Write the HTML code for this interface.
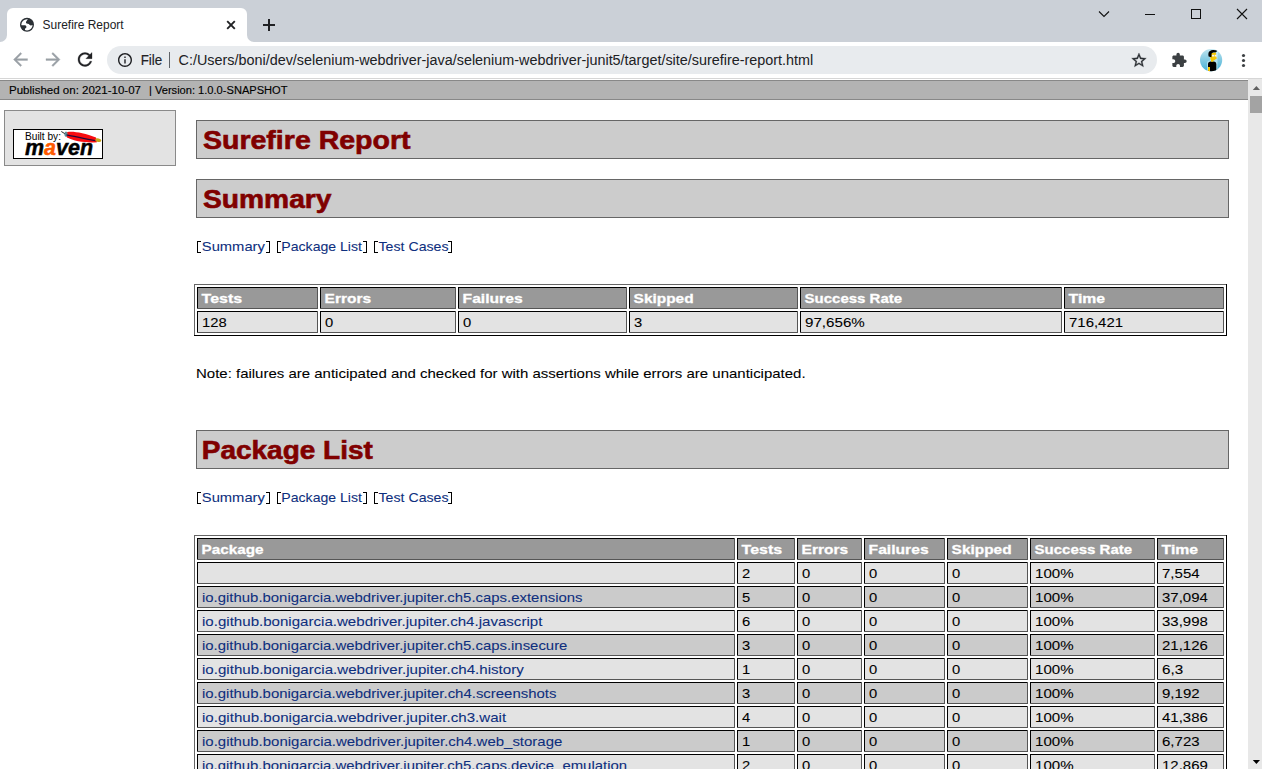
<!DOCTYPE html>
<html><head><meta charset="utf-8"><title>Surefire Report</title>
<style>html,body{margin:0;padding:0;width:1262px;height:769px;overflow:hidden;background:#fff}svg{display:block}text{white-space:pre}</style>
</head><body><svg width="1262" height="769" viewBox="0 0 1262 769">
<rect x="0" y="0" width="1262" height="42" fill="#cbd0d7"/>
<path d="M0 42 A7 7 0 0 0 7 35 L7 14 A6 6 0 0 1 13 8 L241 8 A6 6 0 0 1 247 14 L247 35 A7 7 0 0 0 254 42 Z" fill="#fff"/>
<rect x="0" y="42" width="1262" height="36" fill="#fff"/>
<rect x="0" y="78" width="1262" height="1" fill="#d6d6d6"/>
<defs><clipPath id="gc"><circle cx="27" cy="24.8" r="6.5"/></clipPath></defs><circle cx="27" cy="24.8" r="7" fill="#2b3035"/><circle cx="27" cy="24.8" r="5.6" fill="#fff"/><g clip-path="url(#gc)" fill="#2b3035"><path d="M27.8 19.3 L26.2 21.6 Q25.6 23 26.6 23.6 L28.8 24 Q29.6 25.4 30.8 25.6 L33 25 L33 17 Z"/><path d="M20 25.3 L25.2 25.3 Q26.8 25.8 26.4 27.4 L25 28.8 L24.8 32 L20 32 Z"/></g>
<text x="42.6" y="29" font-family="Liberation Sans" font-size="12" font-weight="normal" fill="#202124" textLength="81.00" lengthAdjust="spacingAndGlyphs">Surefire Report</text>
<path d="M227.2 21.2 L234.8 28.8 M234.8 21.2 L227.2 28.8" stroke="#202124" stroke-width="1.9" fill="none"/>
<path d="M269 19 V31 M263 25 H275" stroke="#202124" stroke-width="2" fill="none"/>
<path d="M1099 11.5 L1104 16.5 L1109 11.5" stroke="#111" stroke-width="1.1" fill="none"/>
<rect x="1145" y="14" width="10" height="1" fill="#111"/>
<rect x="1191.5" y="9.5" width="9" height="9" stroke="#111" stroke-width="1" fill="none"/>
<path d="M1237 9 L1247 19 M1247 9 L1237 19" stroke="#111" stroke-width="1.1" fill="none"/>
<g transform="translate(10,49) scale(0.875)"><path d="M20 11H7.83l5.59-5.59L12 4l-8 8 8 8 1.41-1.41L7.83 13H20v-2z" fill="#9aa0a6" stroke="#9aa0a6" stroke-width="0.4"/></g>
<g transform="translate(42.5,49) scale(0.875)"><path d="M4 11h12.17l-5.59-5.59L12 4l8 8-8 8-1.41-1.41L16.17 13H4v-2z" fill="#9aa0a6" stroke="#9aa0a6" stroke-width="0.4"/></g>
<g transform="translate(74.5,49) scale(0.875)"><path d="M17.65 6.35C16.2 4.9 14.21 4 12 4c-4.42 0-7.99 3.58-7.99 8s3.57 8 7.99 8c3.73 0 6.84-2.55 7.73-6h-2.08c-.82 2.33-3.04 4-5.65 4-3.31 0-6-2.69-6-6s2.69-6 6-6c1.66 0 3.14.69 4.22 1.78L13 11h7V4l-2.35 2.35z" fill="#202124" stroke="#202124" stroke-width="0.35"/></g>
<rect x="107" y="46" width="1050" height="28" rx="14" ry="14" fill="#e8ebee"/>
<g transform="translate(116.6,51.6) scale(0.7)"><path d="M11 7h2v2h-2zm0 4h2v6h-2zm1-9C6.48 2 2 6.48 2 12s4.48 10 10 10 10-4.48 10-10S17.52 2 12 2zm0 18c-4.41 0-8-3.59-8-8s3.59-8 8-8 8 3.59 8 8-3.59 8-8 8z" fill="#202124"/></g>
<text x="140.7" y="65" font-family="Liberation Sans" font-size="14" font-weight="normal" fill="#202124" stroke="#202124" stroke-width="0.15" textLength="21.60" lengthAdjust="spacingAndGlyphs">File</text>
<rect x="169" y="52" width="1" height="16" fill="#5f6368"/>
<text x="178.5" y="65" font-family="Liberation Sans" font-size="14" font-weight="normal" fill="#202124" textLength="634.80" lengthAdjust="spacingAndGlyphs">C:/Users/boni/dev/selenium-webdriver-java/selenium-webdriver-junit5/target/site/surefire-report.html</text>
<g transform="translate(1130.2,51.5) scale(0.73)"><path d="M22 9.24l-7.19-.62L12 2 9.19 8.63 2 9.24l5.46 4.73L5.82 21 12 17.27 18.18 21l-1.63-7.03L22 9.24zM12 15.4l-3.76 2.27 1-4.28-3.32-2.88 4.38-.38L12 6.1l1.71 4.04 4.38.38-3.32 2.88 1 4.28L12 15.4z" fill="#2b2f33" stroke="#2b2f33" stroke-width="0.45"/></g>
<g transform="translate(1171,52) scale(0.68)"><path d="M20.5 11H19V7c0-1.1-.9-2-2-2h-4V3.5C13 2.12 11.88 1 10.5 1S8 2.12 8 3.5V5H4c-1.1 0-1.99.9-1.99 2v3.8H3.5c1.490 0 2.7 1.21 2.7 2.7s-1.21 2.7-2.7 2.7H2V20c0 1.1.9 2 2 2h3.8v-1.5c0-1.49 1.21-2.7 2.7-2.7 1.49 0 2.7 1.21 2.7 2.7V22H17c1.1 0 2-.9 2-2v-4h1.5c1.38 0 2.5-1.12 2.5-2.5S21.88 11 20.5 11z" fill="#3c4043"/></g>
<defs><linearGradient id="av" x1="0" y1="0" x2="0" y2="1"><stop offset="0" stop-color="#bde3ee"/><stop offset="1" stop-color="#45b0d6"/></linearGradient><clipPath id="avc"><circle cx="1211.1" cy="60.1" r="11.1"/></clipPath></defs>
<circle cx="1211.1" cy="60.1" r="11.1" fill="url(#av)"/>
<g clip-path="url(#avc)"><path d="M1207 72 L1207 63 Q1207 60.5 1210 60.5 L1210 52 Q1208 49 1213 49 L1218.5 50 L1217.5 58 L1217.5 72 Z" fill="#d5f1f8" opacity="0.6"/><path d="M1208 72 L1208 64 Q1208 61.5 1211 61.5 L1214 61.5 Q1216.3 61.8 1216.3 64 L1216.3 72 Z" fill="#000"/><rect x="1208" y="67" width="2" height="5" fill="#f8c800"/><rect x="1211" y="59.5" width="2.4" height="2.2" fill="#f8c800"/><path d="M1210 53 L1216 52.5 L1216.2 57 L1217 58.3 L1215.5 59.2 Q1214.5 60.8 1212 60.5 L1210.5 59.5 Z" fill="#f8c800"/><path d="M1208.6 56.5 Q1207.8 52.5 1209.6 51.3 Q1211.3 49.8 1213.5 50 L1217.6 50.6 L1216 52.2 L1213 52.6 L1211.6 53.4 L1211.4 57.2 Z" fill="#000"/><rect x="1212" y="54.8" width="2.2" height="1.7" fill="#f4f4f4"/><rect x="1214.8" y="54.8" width="1.8" height="1.7" fill="#f4f4f4"/></g>
<circle cx="1243.5" cy="55.5" r="1.6" fill="#3c4043"/>
<circle cx="1243.5" cy="60.5" r="1.6" fill="#3c4043"/>
<circle cx="1243.5" cy="65.5" r="1.6" fill="#3c4043"/>
<rect x="0" y="79" width="1248" height="690" fill="#fff"/>
<rect x="1248" y="79" width="14" height="690" fill="#e8e8e8"/>
<path d="M1252.8 90 L1256.4 86 L1260 90 Z" fill="#606060"/>
<rect x="1250" y="96" width="12" height="17" fill="#a3a3a3"/>
<path d="M1252.8 760 L1256.4 764 L1260 760 Z" fill="#000"/>
<rect x="0" y="80" width="1248" height="20" fill="#888888"/>
<rect x="0" y="81" width="1248" height="18" fill="#b3b3b3"/>
<text x="9" y="94" font-family="Liberation Sans" font-size="10" font-weight="normal" fill="#000" stroke="#000" stroke-width="0.12" textLength="132.00" lengthAdjust="spacingAndGlyphs">Published on: 2021-10-07</text>
<text x="149" y="94" font-family="Liberation Sans" font-size="10" font-weight="normal" fill="#000" stroke="#000" stroke-width="0.12" textLength="138.50" lengthAdjust="spacingAndGlyphs">| Version: 1.0.0-SNAPSHOT</text>
<rect x="4" y="110" width="172" height="56" fill="#8a8a8a"/>
<rect x="5" y="111" width="170" height="54" fill="#e3e3e3"/>
<rect x="13" y="129" width="90" height="30" fill="#000"/>
<rect x="14" y="130" width="88" height="28" fill="#fff"/>
<text x="25" y="140" font-family="Liberation Sans" font-size="10.5" font-weight="normal" fill="#000" textLength="36.00" lengthAdjust="spacingAndGlyphs">Built by:</text>
<text x="25" y="155" font-family="Liberation Sans" font-size="22.5" font-weight="bold" font-style="italic" fill="#000" stroke="#000" stroke-width="0.5" textLength="68" lengthAdjust="spacingAndGlyphs">m<tspan fill="#ff5a00" stroke="#ff5a00">a</tspan>ven</text>
<path d="M61.3 131.5 L67 135" stroke="#111" stroke-width="0.9"/>
<path d="M67 132.3 C72 130.8 84 133 96 137.6 L97 142.2 C88 143.2 74 141.5 67 137.6 C66 136 66 134 67 132.3Z" fill="#f80c10"/>
<ellipse cx="66" cy="134.3" rx="1.6" ry="2.8" fill="#5d8c98"/>
<path d="M66.5 134.8 C75 136.4 86 139 95.5 140.6" stroke="#24083a" stroke-width="1.3" fill="none"/>
<ellipse cx="98.3" cy="140.2" rx="3" ry="1.8" transform="rotate(12 98.3 140.2)" fill="#c8a418"/>
<rect x="196" y="120" width="1033" height="39" fill="#666666"/>
<rect x="197" y="121" width="1031" height="37" fill="#cccccc"/>
<text x="203" y="149" font-family="Liberation Sans" font-size="25" font-weight="bold" fill="#800000" stroke="#800000" stroke-width="0.6" textLength="207.50" lengthAdjust="spacingAndGlyphs">Surefire Report</text>
<rect x="196" y="179" width="1033" height="39" fill="#666666"/>
<rect x="197" y="180" width="1031" height="37" fill="#cccccc"/>
<text x="203" y="208" font-family="Liberation Sans" font-size="25" font-weight="bold" fill="#800000" stroke="#800000" stroke-width="0.6" textLength="128.50" lengthAdjust="spacingAndGlyphs">Summary</text>
<rect x="196" y="430" width="1033" height="39" fill="#666666"/>
<rect x="197" y="431" width="1031" height="37" fill="#cccccc"/>
<text x="201.8" y="459" font-family="Liberation Sans" font-size="25" font-weight="bold" fill="#800000" stroke="#800000" stroke-width="0.6" textLength="171.00" lengthAdjust="spacingAndGlyphs">Package List</text>
<rect x="197" y="241" width="1" height="12" fill="#000"/>
<rect x="197" y="241" width="4" height="1" fill="#000"/>
<rect x="197" y="252" width="4" height="1" fill="#000"/>
<text x="201.8" y="251" font-family="Liberation Sans" font-size="13.6" font-weight="normal" fill="#0e2f7e" stroke="#0e2f7e" stroke-width="0.08" textLength="63.10" lengthAdjust="spacingAndGlyphs">Summary</text>
<rect x="269" y="241" width="1" height="12" fill="#000"/>
<rect x="266" y="241" width="4" height="1" fill="#000"/>
<rect x="266" y="252" width="4" height="1" fill="#000"/>
<rect x="277" y="241" width="1" height="12" fill="#000"/>
<rect x="277" y="241" width="4" height="1" fill="#000"/>
<rect x="277" y="252" width="4" height="1" fill="#000"/>
<text x="281.37" y="251" font-family="Liberation Sans" font-size="13.6" font-weight="normal" fill="#0e2f7e" stroke="#0e2f7e" stroke-width="0.08" textLength="80.57" lengthAdjust="spacingAndGlyphs">Package List</text>
<rect x="366" y="241" width="1" height="12" fill="#000"/>
<rect x="363" y="241" width="4" height="1" fill="#000"/>
<rect x="363" y="252" width="4" height="1" fill="#000"/>
<rect x="374" y="241" width="1" height="12" fill="#000"/>
<rect x="374" y="241" width="4" height="1" fill="#000"/>
<rect x="374" y="252" width="4" height="1" fill="#000"/>
<text x="378.51" y="251" font-family="Liberation Sans" font-size="13.6" font-weight="normal" fill="#0e2f7e" stroke="#0e2f7e" stroke-width="0.08" textLength="70.07" lengthAdjust="spacingAndGlyphs">Test Cases</text>
<rect x="451" y="241" width="1" height="12" fill="#000"/>
<rect x="448" y="241" width="4" height="1" fill="#000"/>
<rect x="448" y="252" width="4" height="1" fill="#000"/>
<rect x="197" y="492" width="1" height="12" fill="#000"/>
<rect x="197" y="492" width="4" height="1" fill="#000"/>
<rect x="197" y="503" width="4" height="1" fill="#000"/>
<text x="201.8" y="502" font-family="Liberation Sans" font-size="13.6" font-weight="normal" fill="#0e2f7e" stroke="#0e2f7e" stroke-width="0.08" textLength="63.10" lengthAdjust="spacingAndGlyphs">Summary</text>
<rect x="269" y="492" width="1" height="12" fill="#000"/>
<rect x="266" y="492" width="4" height="1" fill="#000"/>
<rect x="266" y="503" width="4" height="1" fill="#000"/>
<rect x="277" y="492" width="1" height="12" fill="#000"/>
<rect x="277" y="492" width="4" height="1" fill="#000"/>
<rect x="277" y="503" width="4" height="1" fill="#000"/>
<text x="281.37" y="502" font-family="Liberation Sans" font-size="13.6" font-weight="normal" fill="#0e2f7e" stroke="#0e2f7e" stroke-width="0.08" textLength="80.57" lengthAdjust="spacingAndGlyphs">Package List</text>
<rect x="366" y="492" width="1" height="12" fill="#000"/>
<rect x="363" y="492" width="4" height="1" fill="#000"/>
<rect x="363" y="503" width="4" height="1" fill="#000"/>
<rect x="374" y="492" width="1" height="12" fill="#000"/>
<rect x="374" y="492" width="4" height="1" fill="#000"/>
<rect x="374" y="503" width="4" height="1" fill="#000"/>
<text x="378.51" y="502" font-family="Liberation Sans" font-size="13.6" font-weight="normal" fill="#0e2f7e" stroke="#0e2f7e" stroke-width="0.08" textLength="70.07" lengthAdjust="spacingAndGlyphs">Test Cases</text>
<rect x="451" y="492" width="1" height="12" fill="#000"/>
<rect x="448" y="492" width="4" height="1" fill="#000"/>
<rect x="448" y="503" width="4" height="1" fill="#000"/>
<rect x="194" y="284" width="1033" height="52" fill="#000000"/>
<rect x="194" y="284" width="1032" height="51" fill="#666666"/>
<rect x="195" y="285" width="1031" height="50" fill="#fff"/>
<rect x="197" y="287" width="121" height="22" fill="#555555"/>
<rect x="197" y="287" width="120" height="21" fill="#000000"/>
<rect x="198" y="288" width="119" height="20" fill="#999999"/>
<text x="201.6" y="303" font-family="Liberation Sans" font-size="13.5" font-weight="bold" fill="#fff" stroke="#fff" stroke-width="0.3" textLength="40.50" lengthAdjust="spacingAndGlyphs">Tests</text>
<rect x="320" y="287" width="136" height="22" fill="#555555"/>
<rect x="320" y="287" width="135" height="21" fill="#000000"/>
<rect x="321" y="288" width="134" height="20" fill="#999999"/>
<text x="324.6" y="303" font-family="Liberation Sans" font-size="13.5" font-weight="bold" fill="#fff" stroke="#fff" stroke-width="0.3" textLength="46.50" lengthAdjust="spacingAndGlyphs">Errors</text>
<rect x="458" y="287" width="169" height="22" fill="#555555"/>
<rect x="458" y="287" width="168" height="21" fill="#000000"/>
<rect x="459" y="288" width="167" height="20" fill="#999999"/>
<text x="462.6" y="303" font-family="Liberation Sans" font-size="13.5" font-weight="bold" fill="#fff" stroke="#fff" stroke-width="0.3" textLength="60.00" lengthAdjust="spacingAndGlyphs">Failures</text>
<rect x="629" y="287" width="169" height="22" fill="#555555"/>
<rect x="629" y="287" width="168" height="21" fill="#000000"/>
<rect x="630" y="288" width="167" height="20" fill="#999999"/>
<text x="633.6" y="303" font-family="Liberation Sans" font-size="13.5" font-weight="bold" fill="#fff" stroke="#fff" stroke-width="0.3" textLength="60.00" lengthAdjust="spacingAndGlyphs">Skipped</text>
<rect x="800" y="287" width="262" height="22" fill="#555555"/>
<rect x="800" y="287" width="261" height="21" fill="#000000"/>
<rect x="801" y="288" width="260" height="20" fill="#999999"/>
<text x="804.6" y="303" font-family="Liberation Sans" font-size="13.5" font-weight="bold" fill="#fff" stroke="#fff" stroke-width="0.3" textLength="97.50" lengthAdjust="spacingAndGlyphs">Success Rate</text>
<rect x="1064" y="287" width="160" height="22" fill="#555555"/>
<rect x="1064" y="287" width="159" height="21" fill="#000000"/>
<rect x="1065" y="288" width="158" height="20" fill="#999999"/>
<text x="1068.6" y="303" font-family="Liberation Sans" font-size="13.5" font-weight="bold" fill="#fff" stroke="#fff" stroke-width="0.3" textLength="36.50" lengthAdjust="spacingAndGlyphs">Time</text>
<rect x="197" y="311" width="121" height="22" fill="#555555"/>
<rect x="197" y="311" width="120" height="21" fill="#000000"/>
<rect x="198" y="312" width="119" height="20" fill="#e3e3e3"/>
<text x="202" y="327" font-family="Liberation Sans" font-size="13.6" font-weight="normal" fill="#000000" stroke="#000000" stroke-width="0.08" textLength="24.67" lengthAdjust="spacingAndGlyphs">128</text>
<rect x="320" y="311" width="136" height="22" fill="#555555"/>
<rect x="320" y="311" width="135" height="21" fill="#000000"/>
<rect x="321" y="312" width="134" height="20" fill="#e3e3e3"/>
<text x="325" y="327" font-family="Liberation Sans" font-size="13.6" font-weight="normal" fill="#000000" stroke="#000000" stroke-width="0.08" textLength="8.22" lengthAdjust="spacingAndGlyphs">0</text>
<rect x="458" y="311" width="169" height="22" fill="#555555"/>
<rect x="458" y="311" width="168" height="21" fill="#000000"/>
<rect x="459" y="312" width="167" height="20" fill="#e3e3e3"/>
<text x="463" y="327" font-family="Liberation Sans" font-size="13.6" font-weight="normal" fill="#000000" stroke="#000000" stroke-width="0.08" textLength="8.22" lengthAdjust="spacingAndGlyphs">0</text>
<rect x="629" y="311" width="169" height="22" fill="#555555"/>
<rect x="629" y="311" width="168" height="21" fill="#000000"/>
<rect x="630" y="312" width="167" height="20" fill="#e3e3e3"/>
<text x="634" y="327" font-family="Liberation Sans" font-size="13.6" font-weight="normal" fill="#000000" stroke="#000000" stroke-width="0.08" textLength="8.22" lengthAdjust="spacingAndGlyphs">3</text>
<rect x="800" y="311" width="262" height="22" fill="#555555"/>
<rect x="800" y="311" width="261" height="21" fill="#000000"/>
<rect x="801" y="312" width="260" height="20" fill="#e3e3e3"/>
<text x="805" y="327" font-family="Liberation Sans" font-size="13.6" font-weight="normal" fill="#000000" stroke="#000000" stroke-width="0.08" textLength="59.77" lengthAdjust="spacingAndGlyphs">97,656%</text>
<rect x="1064" y="311" width="160" height="22" fill="#555555"/>
<rect x="1064" y="311" width="159" height="21" fill="#000000"/>
<rect x="1065" y="312" width="158" height="20" fill="#e3e3e3"/>
<text x="1069" y="327" font-family="Liberation Sans" font-size="13.6" font-weight="normal" fill="#000000" stroke="#000000" stroke-width="0.08" textLength="54.05" lengthAdjust="spacingAndGlyphs">716,421</text>
<text x="196" y="378" font-family="Liberation Sans" font-size="13.6" font-weight="normal" fill="#000000" stroke="#000000" stroke-width="0.08" textLength="609.60" lengthAdjust="spacingAndGlyphs">Note: failures are anticipated and checked for with assertions while errors are unanticipated.</text>
<rect x="194" y="535" width="1033" height="268" fill="#000000"/>
<rect x="194" y="535" width="1032" height="267" fill="#666666"/>
<rect x="195" y="536" width="1031" height="266" fill="#fff"/>
<rect x="197" y="538" width="538" height="22" fill="#555555"/>
<rect x="197" y="538" width="537" height="21" fill="#000000"/>
<rect x="198" y="539" width="536" height="20" fill="#999999"/>
<text x="201.6" y="554" font-family="Liberation Sans" font-size="13.5" font-weight="bold" fill="#fff" stroke="#fff" stroke-width="0.3" textLength="62.00" lengthAdjust="spacingAndGlyphs">Package</text>
<rect x="737" y="538" width="58" height="22" fill="#555555"/>
<rect x="737" y="538" width="57" height="21" fill="#000000"/>
<rect x="738" y="539" width="56" height="20" fill="#999999"/>
<text x="741.6" y="554" font-family="Liberation Sans" font-size="13.5" font-weight="bold" fill="#fff" stroke="#fff" stroke-width="0.3" textLength="40.50" lengthAdjust="spacingAndGlyphs">Tests</text>
<rect x="797" y="538" width="65" height="22" fill="#555555"/>
<rect x="797" y="538" width="64" height="21" fill="#000000"/>
<rect x="798" y="539" width="63" height="20" fill="#999999"/>
<text x="801.6" y="554" font-family="Liberation Sans" font-size="13.5" font-weight="bold" fill="#fff" stroke="#fff" stroke-width="0.3" textLength="46.50" lengthAdjust="spacingAndGlyphs">Errors</text>
<rect x="864" y="538" width="81" height="22" fill="#555555"/>
<rect x="864" y="538" width="80" height="21" fill="#000000"/>
<rect x="865" y="539" width="79" height="20" fill="#999999"/>
<text x="868.6" y="554" font-family="Liberation Sans" font-size="13.5" font-weight="bold" fill="#fff" stroke="#fff" stroke-width="0.3" textLength="60.00" lengthAdjust="spacingAndGlyphs">Failures</text>
<rect x="947" y="538" width="81" height="22" fill="#555555"/>
<rect x="947" y="538" width="80" height="21" fill="#000000"/>
<rect x="948" y="539" width="79" height="20" fill="#999999"/>
<text x="951.6" y="554" font-family="Liberation Sans" font-size="13.5" font-weight="bold" fill="#fff" stroke="#fff" stroke-width="0.3" textLength="60.00" lengthAdjust="spacingAndGlyphs">Skipped</text>
<rect x="1030" y="538" width="125" height="22" fill="#555555"/>
<rect x="1030" y="538" width="124" height="21" fill="#000000"/>
<rect x="1031" y="539" width="123" height="20" fill="#999999"/>
<text x="1034.6" y="554" font-family="Liberation Sans" font-size="13.5" font-weight="bold" fill="#fff" stroke="#fff" stroke-width="0.3" textLength="97.50" lengthAdjust="spacingAndGlyphs">Success Rate</text>
<rect x="1157" y="538" width="67" height="22" fill="#555555"/>
<rect x="1157" y="538" width="66" height="21" fill="#000000"/>
<rect x="1158" y="539" width="65" height="20" fill="#999999"/>
<text x="1161.6" y="554" font-family="Liberation Sans" font-size="13.5" font-weight="bold" fill="#fff" stroke="#fff" stroke-width="0.3" textLength="36.50" lengthAdjust="spacingAndGlyphs">Time</text>
<rect x="197" y="562" width="538" height="22" fill="#555555"/>
<rect x="197" y="562" width="537" height="21" fill="#000000"/>
<rect x="198" y="563" width="536" height="20" fill="#e3e3e3"/>
<rect x="737" y="562" width="58" height="22" fill="#555555"/>
<rect x="737" y="562" width="57" height="21" fill="#000000"/>
<rect x="738" y="563" width="56" height="20" fill="#e3e3e3"/>
<text x="742" y="578" font-family="Liberation Sans" font-size="13.6" font-weight="normal" fill="#000000" stroke="#000000" stroke-width="0.08" textLength="8.22" lengthAdjust="spacingAndGlyphs">2</text>
<rect x="797" y="562" width="65" height="22" fill="#555555"/>
<rect x="797" y="562" width="64" height="21" fill="#000000"/>
<rect x="798" y="563" width="63" height="20" fill="#e3e3e3"/>
<text x="802" y="578" font-family="Liberation Sans" font-size="13.6" font-weight="normal" fill="#000000" stroke="#000000" stroke-width="0.08" textLength="8.22" lengthAdjust="spacingAndGlyphs">0</text>
<rect x="864" y="562" width="81" height="22" fill="#555555"/>
<rect x="864" y="562" width="80" height="21" fill="#000000"/>
<rect x="865" y="563" width="79" height="20" fill="#e3e3e3"/>
<text x="869" y="578" font-family="Liberation Sans" font-size="13.6" font-weight="normal" fill="#000000" stroke="#000000" stroke-width="0.08" textLength="8.22" lengthAdjust="spacingAndGlyphs">0</text>
<rect x="947" y="562" width="81" height="22" fill="#555555"/>
<rect x="947" y="562" width="80" height="21" fill="#000000"/>
<rect x="948" y="563" width="79" height="20" fill="#e3e3e3"/>
<text x="952" y="578" font-family="Liberation Sans" font-size="13.6" font-weight="normal" fill="#000000" stroke="#000000" stroke-width="0.08" textLength="8.22" lengthAdjust="spacingAndGlyphs">0</text>
<rect x="1030" y="562" width="125" height="22" fill="#555555"/>
<rect x="1030" y="562" width="124" height="21" fill="#000000"/>
<rect x="1031" y="563" width="123" height="20" fill="#e3e3e3"/>
<text x="1035" y="578" font-family="Liberation Sans" font-size="13.6" font-weight="normal" fill="#000000" stroke="#000000" stroke-width="0.08" textLength="38.62" lengthAdjust="spacingAndGlyphs">100%</text>
<rect x="1157" y="562" width="67" height="22" fill="#555555"/>
<rect x="1157" y="562" width="66" height="21" fill="#000000"/>
<rect x="1158" y="563" width="65" height="20" fill="#e3e3e3"/>
<text x="1162" y="578" font-family="Liberation Sans" font-size="13.6" font-weight="normal" fill="#000000" stroke="#000000" stroke-width="0.08" textLength="37.60" lengthAdjust="spacingAndGlyphs">7,554</text>
<rect x="197" y="586" width="538" height="22" fill="#555555"/>
<rect x="197" y="586" width="537" height="21" fill="#000000"/>
<rect x="198" y="587" width="536" height="20" fill="#cbcbcb"/>
<text x="202" y="602" font-family="Liberation Sans" font-size="13.6" font-weight="normal" fill="#0e2f7e" stroke="#0e2f7e" stroke-width="0.08" textLength="380.50" lengthAdjust="spacingAndGlyphs">io.github.bonigarcia.webdriver.jupiter.ch5.caps.extensions</text>
<rect x="737" y="586" width="58" height="22" fill="#555555"/>
<rect x="737" y="586" width="57" height="21" fill="#000000"/>
<rect x="738" y="587" width="56" height="20" fill="#cbcbcb"/>
<text x="742" y="602" font-family="Liberation Sans" font-size="13.6" font-weight="normal" fill="#000000" stroke="#000000" stroke-width="0.08" textLength="8.22" lengthAdjust="spacingAndGlyphs">5</text>
<rect x="797" y="586" width="65" height="22" fill="#555555"/>
<rect x="797" y="586" width="64" height="21" fill="#000000"/>
<rect x="798" y="587" width="63" height="20" fill="#cbcbcb"/>
<text x="802" y="602" font-family="Liberation Sans" font-size="13.6" font-weight="normal" fill="#000000" stroke="#000000" stroke-width="0.08" textLength="8.22" lengthAdjust="spacingAndGlyphs">0</text>
<rect x="864" y="586" width="81" height="22" fill="#555555"/>
<rect x="864" y="586" width="80" height="21" fill="#000000"/>
<rect x="865" y="587" width="79" height="20" fill="#cbcbcb"/>
<text x="869" y="602" font-family="Liberation Sans" font-size="13.6" font-weight="normal" fill="#000000" stroke="#000000" stroke-width="0.08" textLength="8.22" lengthAdjust="spacingAndGlyphs">0</text>
<rect x="947" y="586" width="81" height="22" fill="#555555"/>
<rect x="947" y="586" width="80" height="21" fill="#000000"/>
<rect x="948" y="587" width="79" height="20" fill="#cbcbcb"/>
<text x="952" y="602" font-family="Liberation Sans" font-size="13.6" font-weight="normal" fill="#000000" stroke="#000000" stroke-width="0.08" textLength="8.22" lengthAdjust="spacingAndGlyphs">0</text>
<rect x="1030" y="586" width="125" height="22" fill="#555555"/>
<rect x="1030" y="586" width="124" height="21" fill="#000000"/>
<rect x="1031" y="587" width="123" height="20" fill="#cbcbcb"/>
<text x="1035" y="602" font-family="Liberation Sans" font-size="13.6" font-weight="normal" fill="#000000" stroke="#000000" stroke-width="0.08" textLength="38.62" lengthAdjust="spacingAndGlyphs">100%</text>
<rect x="1157" y="586" width="67" height="22" fill="#555555"/>
<rect x="1157" y="586" width="66" height="21" fill="#000000"/>
<rect x="1158" y="587" width="65" height="20" fill="#cbcbcb"/>
<text x="1162" y="602" font-family="Liberation Sans" font-size="13.6" font-weight="normal" fill="#000000" stroke="#000000" stroke-width="0.08" textLength="45.82" lengthAdjust="spacingAndGlyphs">37,094</text>
<rect x="197" y="610" width="538" height="22" fill="#555555"/>
<rect x="197" y="610" width="537" height="21" fill="#000000"/>
<rect x="198" y="611" width="536" height="20" fill="#e3e3e3"/>
<text x="202" y="626" font-family="Liberation Sans" font-size="13.6" font-weight="normal" fill="#0e2f7e" stroke="#0e2f7e" stroke-width="0.08" textLength="340.35" lengthAdjust="spacingAndGlyphs">io.github.bonigarcia.webdriver.jupiter.ch4.javascript</text>
<rect x="737" y="610" width="58" height="22" fill="#555555"/>
<rect x="737" y="610" width="57" height="21" fill="#000000"/>
<rect x="738" y="611" width="56" height="20" fill="#e3e3e3"/>
<text x="742" y="626" font-family="Liberation Sans" font-size="13.6" font-weight="normal" fill="#000000" stroke="#000000" stroke-width="0.08" textLength="8.22" lengthAdjust="spacingAndGlyphs">6</text>
<rect x="797" y="610" width="65" height="22" fill="#555555"/>
<rect x="797" y="610" width="64" height="21" fill="#000000"/>
<rect x="798" y="611" width="63" height="20" fill="#e3e3e3"/>
<text x="802" y="626" font-family="Liberation Sans" font-size="13.6" font-weight="normal" fill="#000000" stroke="#000000" stroke-width="0.08" textLength="8.22" lengthAdjust="spacingAndGlyphs">0</text>
<rect x="864" y="610" width="81" height="22" fill="#555555"/>
<rect x="864" y="610" width="80" height="21" fill="#000000"/>
<rect x="865" y="611" width="79" height="20" fill="#e3e3e3"/>
<text x="869" y="626" font-family="Liberation Sans" font-size="13.6" font-weight="normal" fill="#000000" stroke="#000000" stroke-width="0.08" textLength="8.22" lengthAdjust="spacingAndGlyphs">0</text>
<rect x="947" y="610" width="81" height="22" fill="#555555"/>
<rect x="947" y="610" width="80" height="21" fill="#000000"/>
<rect x="948" y="611" width="79" height="20" fill="#e3e3e3"/>
<text x="952" y="626" font-family="Liberation Sans" font-size="13.6" font-weight="normal" fill="#000000" stroke="#000000" stroke-width="0.08" textLength="8.22" lengthAdjust="spacingAndGlyphs">0</text>
<rect x="1030" y="610" width="125" height="22" fill="#555555"/>
<rect x="1030" y="610" width="124" height="21" fill="#000000"/>
<rect x="1031" y="611" width="123" height="20" fill="#e3e3e3"/>
<text x="1035" y="626" font-family="Liberation Sans" font-size="13.6" font-weight="normal" fill="#000000" stroke="#000000" stroke-width="0.08" textLength="38.62" lengthAdjust="spacingAndGlyphs">100%</text>
<rect x="1157" y="610" width="67" height="22" fill="#555555"/>
<rect x="1157" y="610" width="66" height="21" fill="#000000"/>
<rect x="1158" y="611" width="65" height="20" fill="#e3e3e3"/>
<text x="1162" y="626" font-family="Liberation Sans" font-size="13.6" font-weight="normal" fill="#000000" stroke="#000000" stroke-width="0.08" textLength="45.82" lengthAdjust="spacingAndGlyphs">33,998</text>
<rect x="197" y="634" width="538" height="22" fill="#555555"/>
<rect x="197" y="634" width="537" height="21" fill="#000000"/>
<rect x="198" y="635" width="536" height="20" fill="#cbcbcb"/>
<text x="202" y="650" font-family="Liberation Sans" font-size="13.6" font-weight="normal" fill="#0e2f7e" stroke="#0e2f7e" stroke-width="0.08" textLength="365.39" lengthAdjust="spacingAndGlyphs">io.github.bonigarcia.webdriver.jupiter.ch5.caps.insecure</text>
<rect x="737" y="634" width="58" height="22" fill="#555555"/>
<rect x="737" y="634" width="57" height="21" fill="#000000"/>
<rect x="738" y="635" width="56" height="20" fill="#cbcbcb"/>
<text x="742" y="650" font-family="Liberation Sans" font-size="13.6" font-weight="normal" fill="#000000" stroke="#000000" stroke-width="0.08" textLength="8.22" lengthAdjust="spacingAndGlyphs">3</text>
<rect x="797" y="634" width="65" height="22" fill="#555555"/>
<rect x="797" y="634" width="64" height="21" fill="#000000"/>
<rect x="798" y="635" width="63" height="20" fill="#cbcbcb"/>
<text x="802" y="650" font-family="Liberation Sans" font-size="13.6" font-weight="normal" fill="#000000" stroke="#000000" stroke-width="0.08" textLength="8.22" lengthAdjust="spacingAndGlyphs">0</text>
<rect x="864" y="634" width="81" height="22" fill="#555555"/>
<rect x="864" y="634" width="80" height="21" fill="#000000"/>
<rect x="865" y="635" width="79" height="20" fill="#cbcbcb"/>
<text x="869" y="650" font-family="Liberation Sans" font-size="13.6" font-weight="normal" fill="#000000" stroke="#000000" stroke-width="0.08" textLength="8.22" lengthAdjust="spacingAndGlyphs">0</text>
<rect x="947" y="634" width="81" height="22" fill="#555555"/>
<rect x="947" y="634" width="80" height="21" fill="#000000"/>
<rect x="948" y="635" width="79" height="20" fill="#cbcbcb"/>
<text x="952" y="650" font-family="Liberation Sans" font-size="13.6" font-weight="normal" fill="#000000" stroke="#000000" stroke-width="0.08" textLength="8.22" lengthAdjust="spacingAndGlyphs">0</text>
<rect x="1030" y="634" width="125" height="22" fill="#555555"/>
<rect x="1030" y="634" width="124" height="21" fill="#000000"/>
<rect x="1031" y="635" width="123" height="20" fill="#cbcbcb"/>
<text x="1035" y="650" font-family="Liberation Sans" font-size="13.6" font-weight="normal" fill="#000000" stroke="#000000" stroke-width="0.08" textLength="38.62" lengthAdjust="spacingAndGlyphs">100%</text>
<rect x="1157" y="634" width="67" height="22" fill="#555555"/>
<rect x="1157" y="634" width="66" height="21" fill="#000000"/>
<rect x="1158" y="635" width="65" height="20" fill="#cbcbcb"/>
<text x="1162" y="650" font-family="Liberation Sans" font-size="13.6" font-weight="normal" fill="#000000" stroke="#000000" stroke-width="0.08" textLength="45.82" lengthAdjust="spacingAndGlyphs">21,126</text>
<rect x="197" y="658" width="538" height="22" fill="#555555"/>
<rect x="197" y="658" width="537" height="21" fill="#000000"/>
<rect x="198" y="659" width="536" height="20" fill="#e3e3e3"/>
<text x="202" y="674" font-family="Liberation Sans" font-size="13.6" font-weight="normal" fill="#0e2f7e" stroke="#0e2f7e" stroke-width="0.08" textLength="321.78" lengthAdjust="spacingAndGlyphs">io.github.bonigarcia.webdriver.jupiter.ch4.history</text>
<rect x="737" y="658" width="58" height="22" fill="#555555"/>
<rect x="737" y="658" width="57" height="21" fill="#000000"/>
<rect x="738" y="659" width="56" height="20" fill="#e3e3e3"/>
<text x="742" y="674" font-family="Liberation Sans" font-size="13.6" font-weight="normal" fill="#000000" stroke="#000000" stroke-width="0.08" textLength="8.22" lengthAdjust="spacingAndGlyphs">1</text>
<rect x="797" y="658" width="65" height="22" fill="#555555"/>
<rect x="797" y="658" width="64" height="21" fill="#000000"/>
<rect x="798" y="659" width="63" height="20" fill="#e3e3e3"/>
<text x="802" y="674" font-family="Liberation Sans" font-size="13.6" font-weight="normal" fill="#000000" stroke="#000000" stroke-width="0.08" textLength="8.22" lengthAdjust="spacingAndGlyphs">0</text>
<rect x="864" y="658" width="81" height="22" fill="#555555"/>
<rect x="864" y="658" width="80" height="21" fill="#000000"/>
<rect x="865" y="659" width="79" height="20" fill="#e3e3e3"/>
<text x="869" y="674" font-family="Liberation Sans" font-size="13.6" font-weight="normal" fill="#000000" stroke="#000000" stroke-width="0.08" textLength="8.22" lengthAdjust="spacingAndGlyphs">0</text>
<rect x="947" y="658" width="81" height="22" fill="#555555"/>
<rect x="947" y="658" width="80" height="21" fill="#000000"/>
<rect x="948" y="659" width="79" height="20" fill="#e3e3e3"/>
<text x="952" y="674" font-family="Liberation Sans" font-size="13.6" font-weight="normal" fill="#000000" stroke="#000000" stroke-width="0.08" textLength="8.22" lengthAdjust="spacingAndGlyphs">0</text>
<rect x="1030" y="658" width="125" height="22" fill="#555555"/>
<rect x="1030" y="658" width="124" height="21" fill="#000000"/>
<rect x="1031" y="659" width="123" height="20" fill="#e3e3e3"/>
<text x="1035" y="674" font-family="Liberation Sans" font-size="13.6" font-weight="normal" fill="#000000" stroke="#000000" stroke-width="0.08" textLength="38.62" lengthAdjust="spacingAndGlyphs">100%</text>
<rect x="1157" y="658" width="67" height="22" fill="#555555"/>
<rect x="1157" y="658" width="66" height="21" fill="#000000"/>
<rect x="1158" y="659" width="65" height="20" fill="#e3e3e3"/>
<text x="1162" y="674" font-family="Liberation Sans" font-size="13.6" font-weight="normal" fill="#000000" stroke="#000000" stroke-width="0.08" textLength="21.15" lengthAdjust="spacingAndGlyphs">6,3</text>
<rect x="197" y="682" width="538" height="22" fill="#555555"/>
<rect x="197" y="682" width="537" height="21" fill="#000000"/>
<rect x="198" y="683" width="536" height="20" fill="#cbcbcb"/>
<text x="202" y="698" font-family="Liberation Sans" font-size="13.6" font-weight="normal" fill="#0e2f7e" stroke="#0e2f7e" stroke-width="0.08" textLength="354.38" lengthAdjust="spacingAndGlyphs">io.github.bonigarcia.webdriver.jupiter.ch4.screenshots</text>
<rect x="737" y="682" width="58" height="22" fill="#555555"/>
<rect x="737" y="682" width="57" height="21" fill="#000000"/>
<rect x="738" y="683" width="56" height="20" fill="#cbcbcb"/>
<text x="742" y="698" font-family="Liberation Sans" font-size="13.6" font-weight="normal" fill="#000000" stroke="#000000" stroke-width="0.08" textLength="8.22" lengthAdjust="spacingAndGlyphs">3</text>
<rect x="797" y="682" width="65" height="22" fill="#555555"/>
<rect x="797" y="682" width="64" height="21" fill="#000000"/>
<rect x="798" y="683" width="63" height="20" fill="#cbcbcb"/>
<text x="802" y="698" font-family="Liberation Sans" font-size="13.6" font-weight="normal" fill="#000000" stroke="#000000" stroke-width="0.08" textLength="8.22" lengthAdjust="spacingAndGlyphs">0</text>
<rect x="864" y="682" width="81" height="22" fill="#555555"/>
<rect x="864" y="682" width="80" height="21" fill="#000000"/>
<rect x="865" y="683" width="79" height="20" fill="#cbcbcb"/>
<text x="869" y="698" font-family="Liberation Sans" font-size="13.6" font-weight="normal" fill="#000000" stroke="#000000" stroke-width="0.08" textLength="8.22" lengthAdjust="spacingAndGlyphs">0</text>
<rect x="947" y="682" width="81" height="22" fill="#555555"/>
<rect x="947" y="682" width="80" height="21" fill="#000000"/>
<rect x="948" y="683" width="79" height="20" fill="#cbcbcb"/>
<text x="952" y="698" font-family="Liberation Sans" font-size="13.6" font-weight="normal" fill="#000000" stroke="#000000" stroke-width="0.08" textLength="8.22" lengthAdjust="spacingAndGlyphs">0</text>
<rect x="1030" y="682" width="125" height="22" fill="#555555"/>
<rect x="1030" y="682" width="124" height="21" fill="#000000"/>
<rect x="1031" y="683" width="123" height="20" fill="#cbcbcb"/>
<text x="1035" y="698" font-family="Liberation Sans" font-size="13.6" font-weight="normal" fill="#000000" stroke="#000000" stroke-width="0.08" textLength="38.62" lengthAdjust="spacingAndGlyphs">100%</text>
<rect x="1157" y="682" width="67" height="22" fill="#555555"/>
<rect x="1157" y="682" width="66" height="21" fill="#000000"/>
<rect x="1158" y="683" width="65" height="20" fill="#cbcbcb"/>
<text x="1162" y="698" font-family="Liberation Sans" font-size="13.6" font-weight="normal" fill="#000000" stroke="#000000" stroke-width="0.08" textLength="37.60" lengthAdjust="spacingAndGlyphs">9,192</text>
<rect x="197" y="706" width="538" height="22" fill="#555555"/>
<rect x="197" y="706" width="537" height="21" fill="#000000"/>
<rect x="198" y="707" width="536" height="20" fill="#e3e3e3"/>
<text x="202" y="722" font-family="Liberation Sans" font-size="13.6" font-weight="normal" fill="#0e2f7e" stroke="#0e2f7e" stroke-width="0.08" textLength="304.14" lengthAdjust="spacingAndGlyphs">io.github.bonigarcia.webdriver.jupiter.ch3.wait</text>
<rect x="737" y="706" width="58" height="22" fill="#555555"/>
<rect x="737" y="706" width="57" height="21" fill="#000000"/>
<rect x="738" y="707" width="56" height="20" fill="#e3e3e3"/>
<text x="742" y="722" font-family="Liberation Sans" font-size="13.6" font-weight="normal" fill="#000000" stroke="#000000" stroke-width="0.08" textLength="8.22" lengthAdjust="spacingAndGlyphs">4</text>
<rect x="797" y="706" width="65" height="22" fill="#555555"/>
<rect x="797" y="706" width="64" height="21" fill="#000000"/>
<rect x="798" y="707" width="63" height="20" fill="#e3e3e3"/>
<text x="802" y="722" font-family="Liberation Sans" font-size="13.6" font-weight="normal" fill="#000000" stroke="#000000" stroke-width="0.08" textLength="8.22" lengthAdjust="spacingAndGlyphs">0</text>
<rect x="864" y="706" width="81" height="22" fill="#555555"/>
<rect x="864" y="706" width="80" height="21" fill="#000000"/>
<rect x="865" y="707" width="79" height="20" fill="#e3e3e3"/>
<text x="869" y="722" font-family="Liberation Sans" font-size="13.6" font-weight="normal" fill="#000000" stroke="#000000" stroke-width="0.08" textLength="8.22" lengthAdjust="spacingAndGlyphs">0</text>
<rect x="947" y="706" width="81" height="22" fill="#555555"/>
<rect x="947" y="706" width="80" height="21" fill="#000000"/>
<rect x="948" y="707" width="79" height="20" fill="#e3e3e3"/>
<text x="952" y="722" font-family="Liberation Sans" font-size="13.6" font-weight="normal" fill="#000000" stroke="#000000" stroke-width="0.08" textLength="8.22" lengthAdjust="spacingAndGlyphs">0</text>
<rect x="1030" y="706" width="125" height="22" fill="#555555"/>
<rect x="1030" y="706" width="124" height="21" fill="#000000"/>
<rect x="1031" y="707" width="123" height="20" fill="#e3e3e3"/>
<text x="1035" y="722" font-family="Liberation Sans" font-size="13.6" font-weight="normal" fill="#000000" stroke="#000000" stroke-width="0.08" textLength="38.62" lengthAdjust="spacingAndGlyphs">100%</text>
<rect x="1157" y="706" width="67" height="22" fill="#555555"/>
<rect x="1157" y="706" width="66" height="21" fill="#000000"/>
<rect x="1158" y="707" width="65" height="20" fill="#e3e3e3"/>
<text x="1162" y="722" font-family="Liberation Sans" font-size="13.6" font-weight="normal" fill="#000000" stroke="#000000" stroke-width="0.08" textLength="45.82" lengthAdjust="spacingAndGlyphs">41,386</text>
<rect x="197" y="730" width="538" height="22" fill="#555555"/>
<rect x="197" y="730" width="537" height="21" fill="#000000"/>
<rect x="198" y="731" width="536" height="20" fill="#cbcbcb"/>
<text x="202" y="746" font-family="Liberation Sans" font-size="13.6" font-weight="normal" fill="#0e2f7e" stroke="#0e2f7e" stroke-width="0.08" textLength="360.32" lengthAdjust="spacingAndGlyphs">io.github.bonigarcia.webdriver.jupiter.ch4.web_storage</text>
<rect x="737" y="730" width="58" height="22" fill="#555555"/>
<rect x="737" y="730" width="57" height="21" fill="#000000"/>
<rect x="738" y="731" width="56" height="20" fill="#cbcbcb"/>
<text x="742" y="746" font-family="Liberation Sans" font-size="13.6" font-weight="normal" fill="#000000" stroke="#000000" stroke-width="0.08" textLength="8.22" lengthAdjust="spacingAndGlyphs">1</text>
<rect x="797" y="730" width="65" height="22" fill="#555555"/>
<rect x="797" y="730" width="64" height="21" fill="#000000"/>
<rect x="798" y="731" width="63" height="20" fill="#cbcbcb"/>
<text x="802" y="746" font-family="Liberation Sans" font-size="13.6" font-weight="normal" fill="#000000" stroke="#000000" stroke-width="0.08" textLength="8.22" lengthAdjust="spacingAndGlyphs">0</text>
<rect x="864" y="730" width="81" height="22" fill="#555555"/>
<rect x="864" y="730" width="80" height="21" fill="#000000"/>
<rect x="865" y="731" width="79" height="20" fill="#cbcbcb"/>
<text x="869" y="746" font-family="Liberation Sans" font-size="13.6" font-weight="normal" fill="#000000" stroke="#000000" stroke-width="0.08" textLength="8.22" lengthAdjust="spacingAndGlyphs">0</text>
<rect x="947" y="730" width="81" height="22" fill="#555555"/>
<rect x="947" y="730" width="80" height="21" fill="#000000"/>
<rect x="948" y="731" width="79" height="20" fill="#cbcbcb"/>
<text x="952" y="746" font-family="Liberation Sans" font-size="13.6" font-weight="normal" fill="#000000" stroke="#000000" stroke-width="0.08" textLength="8.22" lengthAdjust="spacingAndGlyphs">0</text>
<rect x="1030" y="730" width="125" height="22" fill="#555555"/>
<rect x="1030" y="730" width="124" height="21" fill="#000000"/>
<rect x="1031" y="731" width="123" height="20" fill="#cbcbcb"/>
<text x="1035" y="746" font-family="Liberation Sans" font-size="13.6" font-weight="normal" fill="#000000" stroke="#000000" stroke-width="0.08" textLength="38.62" lengthAdjust="spacingAndGlyphs">100%</text>
<rect x="1157" y="730" width="67" height="22" fill="#555555"/>
<rect x="1157" y="730" width="66" height="21" fill="#000000"/>
<rect x="1158" y="731" width="65" height="20" fill="#cbcbcb"/>
<text x="1162" y="746" font-family="Liberation Sans" font-size="13.6" font-weight="normal" fill="#000000" stroke="#000000" stroke-width="0.08" textLength="37.60" lengthAdjust="spacingAndGlyphs">6,723</text>
<rect x="197" y="754" width="538" height="22" fill="#555555"/>
<rect x="197" y="754" width="537" height="21" fill="#000000"/>
<rect x="198" y="755" width="536" height="20" fill="#e3e3e3"/>
<text x="202" y="770" font-family="Liberation Sans" font-size="13.6" font-weight="normal" fill="#0e2f7e" stroke="#0e2f7e" stroke-width="0.08" textLength="425.04" lengthAdjust="spacingAndGlyphs">io.github.bonigarcia.webdriver.jupiter.ch5.caps.device_emulation</text>
<rect x="737" y="754" width="58" height="22" fill="#555555"/>
<rect x="737" y="754" width="57" height="21" fill="#000000"/>
<rect x="738" y="755" width="56" height="20" fill="#e3e3e3"/>
<text x="742" y="770" font-family="Liberation Sans" font-size="13.6" font-weight="normal" fill="#000000" stroke="#000000" stroke-width="0.08" textLength="8.22" lengthAdjust="spacingAndGlyphs">2</text>
<rect x="797" y="754" width="65" height="22" fill="#555555"/>
<rect x="797" y="754" width="64" height="21" fill="#000000"/>
<rect x="798" y="755" width="63" height="20" fill="#e3e3e3"/>
<text x="802" y="770" font-family="Liberation Sans" font-size="13.6" font-weight="normal" fill="#000000" stroke="#000000" stroke-width="0.08" textLength="8.22" lengthAdjust="spacingAndGlyphs">0</text>
<rect x="864" y="754" width="81" height="22" fill="#555555"/>
<rect x="864" y="754" width="80" height="21" fill="#000000"/>
<rect x="865" y="755" width="79" height="20" fill="#e3e3e3"/>
<text x="869" y="770" font-family="Liberation Sans" font-size="13.6" font-weight="normal" fill="#000000" stroke="#000000" stroke-width="0.08" textLength="8.22" lengthAdjust="spacingAndGlyphs">0</text>
<rect x="947" y="754" width="81" height="22" fill="#555555"/>
<rect x="947" y="754" width="80" height="21" fill="#000000"/>
<rect x="948" y="755" width="79" height="20" fill="#e3e3e3"/>
<text x="952" y="770" font-family="Liberation Sans" font-size="13.6" font-weight="normal" fill="#000000" stroke="#000000" stroke-width="0.08" textLength="8.22" lengthAdjust="spacingAndGlyphs">0</text>
<rect x="1030" y="754" width="125" height="22" fill="#555555"/>
<rect x="1030" y="754" width="124" height="21" fill="#000000"/>
<rect x="1031" y="755" width="123" height="20" fill="#e3e3e3"/>
<text x="1035" y="770" font-family="Liberation Sans" font-size="13.6" font-weight="normal" fill="#000000" stroke="#000000" stroke-width="0.08" textLength="38.62" lengthAdjust="spacingAndGlyphs">100%</text>
<rect x="1157" y="754" width="67" height="22" fill="#555555"/>
<rect x="1157" y="754" width="66" height="21" fill="#000000"/>
<rect x="1158" y="755" width="65" height="20" fill="#e3e3e3"/>
<text x="1162" y="770" font-family="Liberation Sans" font-size="13.6" font-weight="normal" fill="#000000" stroke="#000000" stroke-width="0.08" textLength="45.82" lengthAdjust="spacingAndGlyphs">12,869</text>
<rect x="197" y="778" width="538" height="22" fill="#555555"/>
<rect x="197" y="778" width="537" height="21" fill="#000000"/>
<rect x="198" y="779" width="536" height="20" fill="#cbcbcb"/>
<text x="202" y="794" font-family="Liberation Sans" font-size="13.6" font-weight="normal" fill="#0e2f7e" stroke="#0e2f7e" stroke-width="0.08" textLength="388.72" lengthAdjust="spacingAndGlyphs">io.github.bonigarcia.webdriver.jupiter.ch5.caps.extensions2</text>
<rect x="737" y="778" width="58" height="22" fill="#555555"/>
<rect x="737" y="778" width="57" height="21" fill="#000000"/>
<rect x="738" y="779" width="56" height="20" fill="#cbcbcb"/>
<text x="742" y="794" font-family="Liberation Sans" font-size="13.6" font-weight="normal" fill="#000000" stroke="#000000" stroke-width="0.08" textLength="8.22" lengthAdjust="spacingAndGlyphs">2</text>
<rect x="797" y="778" width="65" height="22" fill="#555555"/>
<rect x="797" y="778" width="64" height="21" fill="#000000"/>
<rect x="798" y="779" width="63" height="20" fill="#cbcbcb"/>
<text x="802" y="794" font-family="Liberation Sans" font-size="13.6" font-weight="normal" fill="#000000" stroke="#000000" stroke-width="0.08" textLength="8.22" lengthAdjust="spacingAndGlyphs">0</text>
<rect x="864" y="778" width="81" height="22" fill="#555555"/>
<rect x="864" y="778" width="80" height="21" fill="#000000"/>
<rect x="865" y="779" width="79" height="20" fill="#cbcbcb"/>
<text x="869" y="794" font-family="Liberation Sans" font-size="13.6" font-weight="normal" fill="#000000" stroke="#000000" stroke-width="0.08" textLength="8.22" lengthAdjust="spacingAndGlyphs">0</text>
<rect x="947" y="778" width="81" height="22" fill="#555555"/>
<rect x="947" y="778" width="80" height="21" fill="#000000"/>
<rect x="948" y="779" width="79" height="20" fill="#cbcbcb"/>
<text x="952" y="794" font-family="Liberation Sans" font-size="13.6" font-weight="normal" fill="#000000" stroke="#000000" stroke-width="0.08" textLength="8.22" lengthAdjust="spacingAndGlyphs">0</text>
<rect x="1030" y="778" width="125" height="22" fill="#555555"/>
<rect x="1030" y="778" width="124" height="21" fill="#000000"/>
<rect x="1031" y="779" width="123" height="20" fill="#cbcbcb"/>
<text x="1035" y="794" font-family="Liberation Sans" font-size="13.6" font-weight="normal" fill="#000000" stroke="#000000" stroke-width="0.08" textLength="38.62" lengthAdjust="spacingAndGlyphs">100%</text>
<rect x="1157" y="778" width="67" height="22" fill="#555555"/>
<rect x="1157" y="778" width="66" height="21" fill="#000000"/>
<rect x="1158" y="779" width="65" height="20" fill="#cbcbcb"/>
<text x="1162" y="794" font-family="Liberation Sans" font-size="13.6" font-weight="normal" fill="#000000" stroke="#000000" stroke-width="0.08" textLength="21.15" lengthAdjust="spacingAndGlyphs">1,0</text>
</svg></body></html>
